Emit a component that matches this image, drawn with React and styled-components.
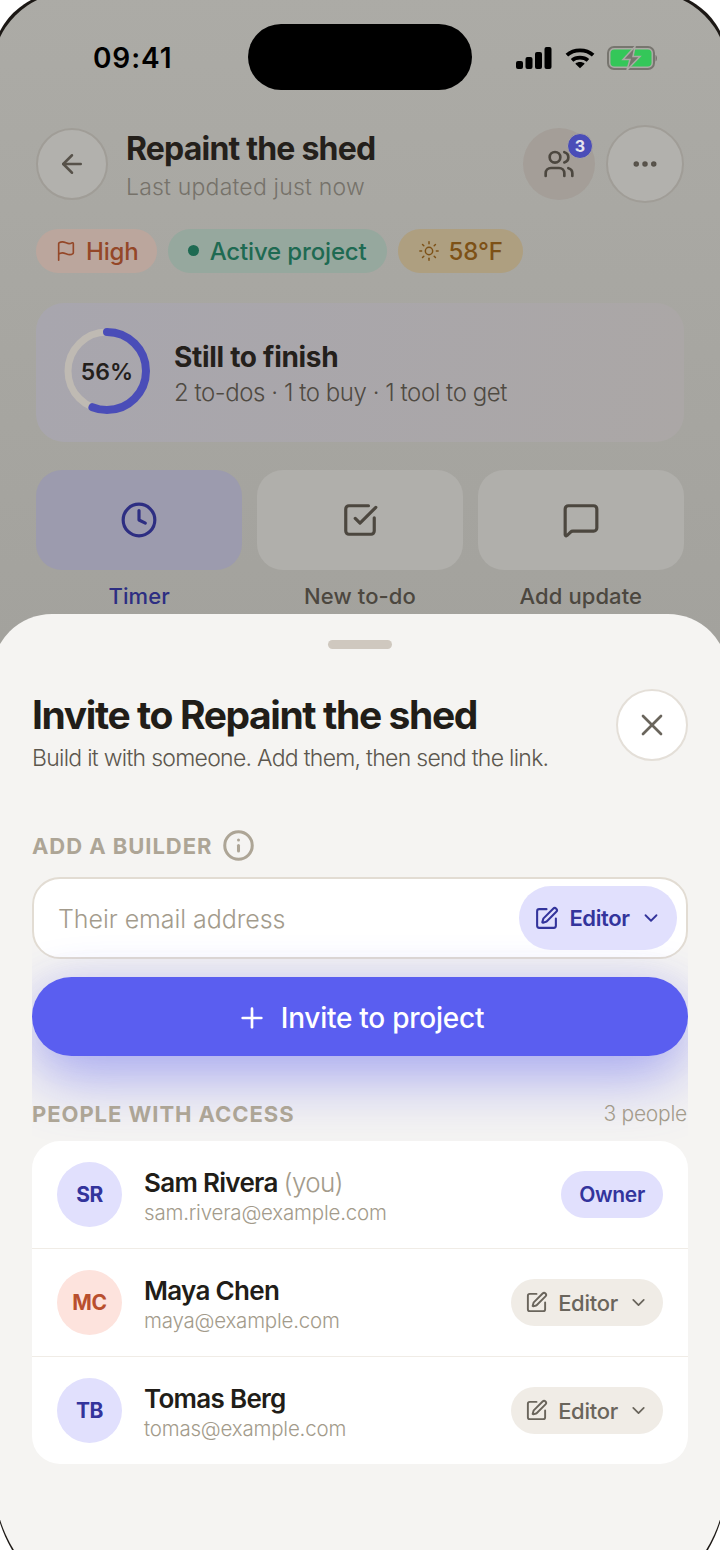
import React from "react";
import styled, { createGlobalStyle } from "styled-components";
import { ArrowLeft, Users, Ellipsis, Flag, Sun, Clock, SquareCheckBig, MessageSquare, X, Info, SquarePen, ChevronDown, Plus } from "lucide-react";

const GlobalStyle = createGlobalStyle`
  html, body { margin: 0; padding: 0; background: #fff; }
  body { font-family: "Inter", "Noto Sans", sans-serif; }
  * { box-sizing: border-box; }
`;

// the device is a bit larger than the shot, so its corners get cut by the edges
const Stage = styled.div`
  width: 720px;
  height: 1550px;
  overflow: hidden;
`;

const Phone = styled.div`
  position: relative;
  width: 736px;
  height: 1597px;
  margin: -8px 0 0 -8px;
  background: #1c1815;
  border-radius: 72px 72px 78px 78px / 72px 72px 118px 118px;
  overflow: hidden;
`;

const Backdrop = styled.div`
  height: 720px;
  padding: 8px 8px 0;
  background: linear-gradient(180deg, #acaba6 0%, #a3a29d 90%);
  border-radius: 80px 80px 0 0;
`;

const StatusBar = styled.div`
  height: 124px;
  padding: 25px 63px 0 93px;
  display: flex;
  align-items: flex-start;
  justify-content: space-between;
`;

const Time = styled.div`
  font-size: 28px;
  font-weight: 600;
  line-height: 66px;
  color: #000;
  letter-spacing: 0.9px;
`;

const Island = styled.div`
  position: absolute;
  left: 256px;
  top: 32px;
  width: 224px;
  height: 66px;
  border-radius: 33px;
  background: #000;
`;

const StatusIcons = styled.div`
  display: flex;
  align-items: center;
  gap: 12.5px;
  height: 66px;
`;

const TopRow = styled.div`
  display: flex;
  align-items: center;
  padding: 0 36px;
  height: 80px;
`;

const RoundButton = styled.div`
  flex: none;
  width: ${p => p.$size}px;
  height: ${p => p.$size}px;
  border-radius: 50%;
  border: 2px solid ${p => p.$line};
  background: ${p => p.$bg};
  display: flex;
  align-items: center;
  justify-content: center;
  color: ${p => p.$fg};
`;

const TitleBlock = styled.div`
  flex: 1;
  margin-left: 18px;
`;

const ProjectTitle = styled.div`
  font-size: 32px;
  font-weight: 700;
  line-height: 40px;
  letter-spacing: -0.8px;
  color: #24201b;
  margin-top: 4px;
`;

const Updated = styled.div`
  font-size: 23px;
  font-weight: 300;
  line-height: 32px;
  letter-spacing: 0.2px;
  margin-top: 2px;
  color: #76726a;
`;

const People = styled.div`
  position: relative;
  flex: none;
  width: 72px;
  height: 72px;
  margin-right: 11px;
  border-radius: 50%;
  background: #a49e98;
  display: flex;
  align-items: center;
  justify-content: center;
  color: #4c473f;
`;

const Badge = styled.div`
  position: absolute;
  top: 5px;
  right: 2px;
  width: 26px;
  height: 26px;
  border-radius: 50%;
  border: 1px solid #aaa6a2;
  background: #4a4db8;
  color: #e4e4ee;
  font-size: 16px;
  font-weight: 700;
  display: flex;
  align-items: center;
  justify-content: center;
`;

const Chips = styled.div`
  display: flex;
  gap: 11px;
  padding: 0 36px;
  margin-top: 25px;
`;

const Chip = styled.div`
  height: 44px;
  padding: 0 ${p => p.$end || 20}px 0 ${p => p.$pad}px;
  border-radius: 22px;
  display: flex;
  align-items: center;
  gap: ${p => p.$gap}px;
  background: ${p => p.$bg};
  color: ${p => p.$fg};
  font-size: 24px;
  font-weight: 500;
  letter-spacing: -0.15px;
`;

const Dot = styled.span`
  width: 11px;
  height: 11px;
  margin-top: -2px;
  border-radius: 50%;
  background: #1e6a52;
`;

const ProgressCard = styled.div`
  margin: 30px 36px 0;
  height: 139px;
  border-radius: 28px;
  background: linear-gradient(100deg, #a8a6ae 0%, #aba7a6 100%);
  padding: 0 27px 3px;
  display: flex;
  align-items: center;
  gap: 23px;
`;

const Ring = styled.div`
  position: relative;
  flex: none;
  width: 88px;
  height: 88px;
`;

const RingLabel = styled.div`
  position: absolute;
  inset: 0;
  display: flex;
  align-items: center;
  justify-content: center;
  padding-top: 2px;
  font-size: 23px;
  font-weight: 600;
  letter-spacing: 0;
  color: #24201b;
`;

const CardTitle = styled.div`
  font-size: 28px;
  font-weight: 700;
  line-height: 36px;
  letter-spacing: -0.3px;
  margin-top: 8px;
  color: #24201b;
`;

const CardText = styled.div`
  font-size: 24px;
  font-weight: 300;
  line-height: 36px;
  letter-spacing: -0.45px;
  color: #4f4a42;
`;

const Actions = styled.div`
  display: grid;
  grid-template-columns: repeat(3, 1fr);
  gap: 14.5px;
  padding: 0 36px;
  margin-top: 28px;
`;

const Action = styled.div`
  display: flex;
  flex-direction: column;
  align-items: center;
  color: ${p => p.$fg};
`;

const ActionTile = styled.div`
  width: 100%;
  height: 100px;
  border-radius: 26px;
  background: ${p => p.$bg};
  display: flex;
  align-items: center;
  justify-content: center;
`;

const ActionLabel = styled.div`
  margin-top: 11px;
  font-size: 22px;
  font-weight: 500;
  line-height: 30px;
  letter-spacing: 0.1px;
`;

const Sheet = styled.div`
  position: absolute;
  left: 0;
  right: 0;
  top: 622px;
  bottom: 0;
  background: #f5f4f2;
  border-radius: 60px 60px 82px 82px / 60px 60px 122px 122px;
  padding: 26px 40px 0;
`;

const Handle = styled.div`
  width: 64px;
  height: 9px;
  margin: 0 auto;
  border-radius: 5px;
  background: #cfc8bf;
`;

const SheetHead = styled.div`
  display: flex;
  justify-content: space-between;
  margin-top: 40px;
`;

const SheetTitle = styled.div`
  font-size: 39px;
  font-weight: 700;
  line-height: 48px;
  letter-spacing: -1.4px;
  color: #211d18;
  margin-top: 2px;
`;

const SheetText = styled.div`
  font-size: 23px;
  font-weight: 300;
  line-height: 30px;
  letter-spacing: -0.72px;
  color: #5c574e;
  margin-top: 4px;
`;

const SectionLabel = styled.div`
  display: flex;
  align-items: center;
  gap: 10px;
  font-size: 22px;
  font-weight: 700;
  line-height: 30px;
  letter-spacing: 0.95px;
  color: #ada596;
`;

const AddLabel = styled(SectionLabel)`
  margin-top: 56px;
`;

// clips the button's glow to the column, which is how it looks in the design
const FormArea = styled.div`
  margin-top: 15px;
  padding-bottom: 12px;
  overflow: hidden;
`;

const EmailField = styled.div`
  height: 82px;
  border: 2px solid #e2dcd3;
  border-radius: 28px;
  background: #fff;
  padding: 0 9px 0 24px;
  display: flex;
  align-items: center;
  justify-content: space-between;
`;

const Placeholder = styled.div`
  padding-top: 2px;
  font-size: 25px;
  font-weight: 300;
  letter-spacing: -0.05px;
  color: #a39b8c;
`;

const RoleSelect = styled.div`
  height: 64px;
  width: 158px;
  border-radius: 32px;
  background: #e1e0fd;
  color: #33349c;
  display: flex;
  align-items: center;
  justify-content: center;
  gap: 10px;
  font-size: 22px;
  font-weight: 600;
  letter-spacing: -0.4px;
`;

const InviteButton = styled.div`
  margin-top: 18px;
  height: 79px;
  padding-top: 2px;
  border-radius: 40px;
  background: #5a5ef0;
  box-shadow: 0 24px 60px rgba(90, 94, 240, 0.46), 0 0 36px rgba(90, 94, 240, 0.12);
  color: #fff;
  display: flex;
  align-items: center;
  justify-content: center;
  gap: 13px;
  font-size: 28px;
  font-weight: 500;
  letter-spacing: -0.25px;
`;

const AccessRow = styled.div`
  display: flex;
  align-items: center;
  justify-content: space-between;
  margin-top: 43px;
`;

const Count = styled.div`
  padding: 0 1px 2px 0;
  font-size: 21px;
  font-weight: 300;
  letter-spacing: -0.25px;
  color: #a39b8b;
`;

const PeopleCard = styled.div`
  background: #fff;
  border-radius: 28px;
  overflow: hidden;
`;

const Person = styled.div`
  padding: 20.5px 25px;
  display: flex;
  align-items: center;
  border-top: ${p => (p.$first ? "none" : "1px solid #f0ece6")};
`;

const Avatar = styled.div`
  flex: none;
  width: 65px;
  height: 65px;
  border-radius: 50%;
  background: ${p => p.$bg};
  color: ${p => p.$fg};
  display: flex;
  align-items: center;
  justify-content: center;
  font-size: 21px;
  font-weight: 700;
  letter-spacing: -0.4px;
`;

const PersonInfo = styled.div`
  flex: 1;
  margin-left: 22px;
  padding-top: 6px;
`;

const PersonName = styled.div`
  font-size: 26px;
  font-weight: 600;
  line-height: 30px;
  letter-spacing: -0.7px;
  color: #211d18;
  span {
    font-weight: 300;
    color: #a39b8b;
  }
`;

const PersonEmail = styled.div`
  font-size: 20.5px;
  font-weight: 300;
  line-height: 30px;
  letter-spacing: -0.2px;
  color: #a39b8b;
`;

const OwnerPill = styled.div`
  height: 47px;
  padding: 0 18px;
  border-radius: 24px;
  background: #e1e0fd;
  color: #33349c;
  display: flex;
  align-items: center;
  font-size: 21px;
  font-weight: 600;
  letter-spacing: -0.3px;
`;

const RolePill = styled.div`
  height: 47px;
  width: 152px;
  border-radius: 24px;
  background: #f0ece6;
  color: #6a655c;
  display: flex;
  align-items: center;
  justify-content: center;
  gap: 10px;
  font-size: 22px;
  font-weight: 500;
  letter-spacing: -0.3px;
`;

const people = [
  { initials: "SR", name: "Sam Rivera", you: true, email: "sam.rivera@example.com", bg: "#e1e0fd", fg: "#33349c" },
  { initials: "MC", name: "Maya Chen", email: "maya@example.com", bg: "#fde3dd", fg: "#b94f2e" },
  { initials: "TB", name: "Tomas Berg", email: "tomas@example.com", bg: "#e1e0fd", fg: "#33349c" },
];

const SignalIcon = () => (
  <svg width="36" height="24" viewBox="0 0 36 24" fill="#000">
    <rect x="0" y="15" width="7" height="8" rx="2" />
    <rect x="9.5" y="11" width="7" height="12" rx="2" />
    <rect x="19" y="6" width="7" height="17" rx="2" />
    <rect x="28.5" y="1" width="7" height="22" rx="2" />
  </svg>
);

const WifiIcon = () => (
  <svg width="30" height="24" viewBox="0 0 32 24" fill="none" stroke="#000" strokeWidth="4">
    <path d="M2 9 C 9.5 2, 22.5 2, 30 9" />
    <path d="M7.5 14.5 C 12 10.5, 20 10.5, 24.5 14.5" />
    <path d="M16 23 L11 18 C 14 15.8, 18 15.8, 21 18 Z" fill="#000" stroke="none" />
  </svg>
);

const BatteryIcon = () => (
  <svg width="50" height="24" viewBox="0 0 50 24">
    <rect x="1" y="1" width="46" height="22" rx="6" fill="none" stroke="#77756f" strokeWidth="2" />
    <rect x="3.5" y="3.5" width="41" height="17" rx="4" fill="#34c759" />
    <path d="M48.5 9 C 50.5 9.5, 50.5 15, 48.5 15.5 Z" fill="#77756f" />
    <path d="M28 0.5 L16 13.5 H23 L20 24 L33 10.5 H26 Z" fill="#77756f" stroke="#abaaa5" strokeWidth="1.5" />
  </svg>
);

const ProgressRing = () => (
  <svg width="88" height="88" viewBox="0 0 88 88" fill="none">
    <circle cx="44" cy="44" r="39" stroke="#bfbab3" strokeWidth="7" />
    <circle
      cx="44"
      cy="44"
      r="39"
      stroke="#4a4db8"
      strokeWidth="8"
      strokeLinecap="round"
      strokeDasharray={`${2 * Math.PI * 39 * 0.56} 999`}
      transform="rotate(-90 44 44)"
    />
  </svg>
);

export default function App() {
  return (
    <>
      <GlobalStyle />
      <Stage>
        <Phone>
          <Backdrop>
            <StatusBar>
              <Time>09:41</Time>
              <StatusIcons>
                <SignalIcon />
                <WifiIcon />
                <BatteryIcon />
              </StatusIcons>
            </StatusBar>
            <Island />
            <TopRow>
              <RoundButton $size={72} $line="#a09d97" $bg="#b2b1ad" $fg="#57524a">
                <ArrowLeft size={30} strokeWidth={2} />
              </RoundButton>
              <TitleBlock>
                <ProjectTitle>Repaint the shed</ProjectTitle>
                <Updated>Last updated just now</Updated>
              </TitleBlock>
              <People>
                <Users size={32} strokeWidth={2} />
                <Badge>3</Badge>
              </People>
              <RoundButton $size={78} $line="#a09d97" $bg="#b2b1ad" $fg="#57524a">
                <Ellipsis size={30} strokeWidth={2.4} />
              </RoundButton>
            </TopRow>
            <Chips>
              <Chip $bg="#bba69d" $fg="#944728" $pad={19} $gap={9} $end={18}>
                <Flag size={22} strokeWidth={1.8} />
                High
              </Chip>
              <Chip $bg="#96a89e" $fg="#1e6a52" $pad={20} $gap={11}>
                <Dot />
                Active project
              </Chip>
              <Chip $bg="#ae9f80" $fg="#7d5116" $pad={20} $gap={9}>
                <Sun size={22} strokeWidth={1.6} />
                58°F
              </Chip>
            </Chips>
            <ProgressCard>
              <Ring>
                <ProgressRing />
                <RingLabel>56%</RingLabel>
              </Ring>
              <div>
                <CardTitle>Still to finish</CardTitle>
                <CardText>2 to-dos · 1 to buy · 1 tool to get</CardText>
              </div>
            </ProgressCard>
            <Actions>
              <Action $fg="#2d2e82">
                <ActionTile $bg="#9c9bae">
                  <Clock size={38} strokeWidth={2} />
                </ActionTile>
                <ActionLabel>Timer</ActionLabel>
              </Action>
              <Action $fg="#4c473f">
                <ActionTile $bg="#b0afab">
                  <SquareCheckBig size={38} strokeWidth={2} />
                </ActionTile>
                <ActionLabel>New to-do</ActionLabel>
              </Action>
              <Action $fg="#4c473f">
                <ActionTile $bg="#b0afab">
                  <MessageSquare size={38} strokeWidth={2} />
                </ActionTile>
                <ActionLabel>Add update</ActionLabel>
              </Action>
            </Actions>
          </Backdrop>
          <Sheet>
            <Handle />
            <SheetHead>
              <div>
                <SheetTitle>Invite to Repaint the shed</SheetTitle>
                <SheetText>Build it with someone. Add them, then send the link.</SheetText>
              </div>
              <RoundButton $size={72} $line="#e4dfd8" $bg="#fff" $fg="#6a655c">
                <X size={36} strokeWidth={1.8} />
              </RoundButton>
            </SheetHead>
            <AddLabel>
              ADD A BUILDER
              <Info size={33} strokeWidth={2.2} />
            </AddLabel>
            <FormArea>
              <EmailField>
                <Placeholder>Their email address</Placeholder>
                <RoleSelect>
                  <SquarePen size={25} strokeWidth={2} />
                  Editor
                  <ChevronDown size={22} strokeWidth={2} />
                </RoleSelect>
              </EmailField>
              <InviteButton>
                <Plus size={32} strokeWidth={2} />
                Invite to project
              </InviteButton>
              <AccessRow>
                <SectionLabel>PEOPLE WITH ACCESS</SectionLabel>
                <Count>3 people</Count>
              </AccessRow>
            </FormArea>
            <PeopleCard>
              {people.map((p, i) => (
                <Person key={p.initials} $first={i === 0}>
                  <Avatar $bg={p.bg} $fg={p.fg}>{p.initials}</Avatar>
                  <PersonInfo>
                    <PersonName>
                      {p.name} {p.you && <span>(you)</span>}
                    </PersonName>
                    <PersonEmail>{p.email}</PersonEmail>
                  </PersonInfo>
                  {p.you ? (
                    <OwnerPill>Owner</OwnerPill>
                  ) : (
                    <RolePill>
                      <SquarePen size={23} strokeWidth={2} />
                      Editor
                      <ChevronDown size={21} strokeWidth={2} />
                    </RolePill>
                  )}
                </Person>
              ))}
            </PeopleCard>
          </Sheet>
        </Phone>
      </Stage>
    </>
  );
}
